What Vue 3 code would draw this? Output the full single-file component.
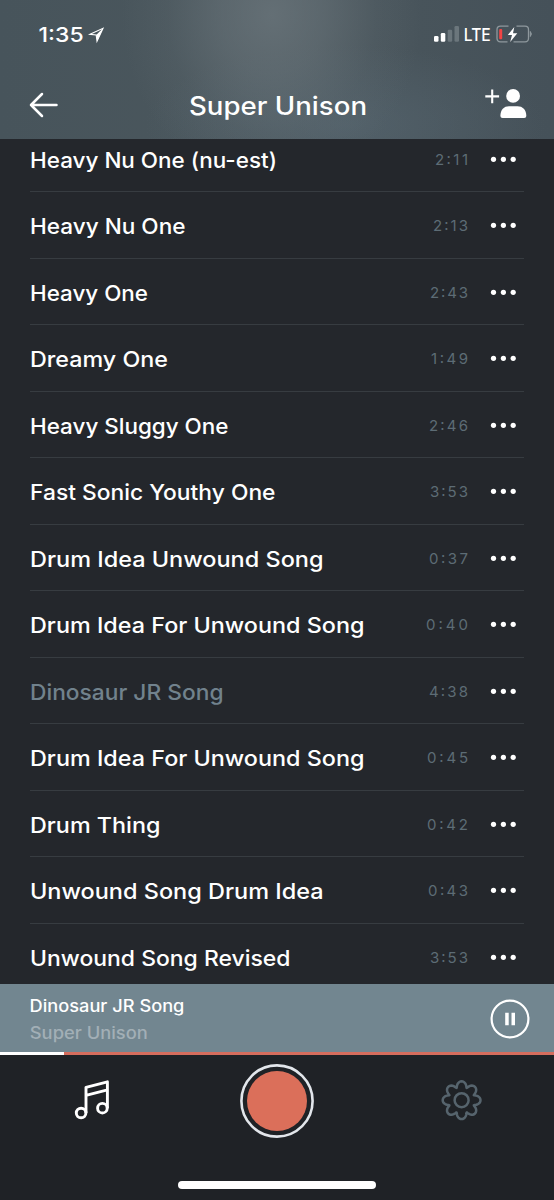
<script setup>
const songs = [
  { title: 'Heavy Nu One (nu-est)', width: 247, time: '2:11', timeWidth: 33 },
  { title: 'Heavy Nu One', width: 155.5, time: '2:13', timeWidth: 35 },
  { title: 'Heavy One', width: 118, time: '2:43', timeWidth: 38 },
  { title: 'Dreamy One', width: 138, time: '1:49', timeWidth: 37 },
  { title: 'Heavy Sluggy One', width: 198.5, time: '2:46', timeWidth: 39 },
  { title: 'Fast Sonic Youthy One', width: 245.5, time: '3:53', timeWidth: 38 },
  { title: 'Drum Idea Unwound Song', width: 293.5, time: '0:37', timeWidth: 39 },
  { title: 'Drum Idea For Unwound Song', width: 334.5, time: '0:40', timeWidth: 42 },
  { title: 'Dinosaur JR Song', width: 193.5, time: '4:38', timeWidth: 39, active: true },
  { title: 'Drum Idea For Unwound Song', width: 334.5, time: '0:45', timeWidth: 41 },
  { title: 'Drum Thing', width: 130.5, time: '0:42', timeWidth: 41 },
  { title: 'Unwound Song Drum Idea', width: 293.5, time: '0:43', timeWidth: 40 },
  { title: 'Unwound Song Revised', width: 260.5, time: '3:53', timeWidth: 38 },
]

const progress = 11.5

// Eight rounded teeth, swept around the hub
const gear = Array.from({ length: 160 }, (_, i) => {
  const a = (i / 160) * Math.PI * 2
  const r = 16.1 + 2.8 * Math.cos(8 * a)
  const t = a + 0.075 * Math.sin(8 * a)
  return `${i ? 'L' : 'M'}${(21.6 + r * Math.cos(t)).toFixed(2)} ${(20.2 + r * Math.sin(t)).toFixed(2)}`
}).join('') + 'Z'
</script>

<template>
  <div class="screen">
    <header class="header">
      <div class="status">
        <svg class="clock" width="70" height="24" viewBox="0 0 70 24">
          <text x="0.6" y="18.7" class="clock-text" textLength="45" lengthAdjust="spacingAndGlyphs">1:35</text>
          <path d="M52 11.3 65 5.3 59 18.3 58.2 12Z" fill="none" stroke="#fff" stroke-width="1.1" stroke-linejoin="miter" />
          <path d="M58.2 12 65 5.3 59.2 18Z" fill="#fff" />
        </svg>
        <svg class="signal" width="102" height="24" viewBox="0 0 102 24">
          <rect x="2" y="13" width="4.5" height="5.8" rx="1.3" fill="#fff" />
          <rect x="8.8" y="10" width="4.5" height="8.8" rx="1.3" fill="#fff" />
          <rect x="15.7" y="6.7" width="4.5" height="12.1" rx="1.3" fill="#6b767c" />
          <rect x="22.5" y="3" width="4.5" height="15.8" rx="1.3" fill="#6b767c" />
          <text x="31.8" y="18.3" class="network" textLength="27" lengthAdjust="spacingAndGlyphs">LTE</text>
          <path d="M76.5 3.2H68.5Q65 3.2 65 6.7V15.3Q65 18.8 68.5 18.8H75.5M84.5 3.2H93Q96.5 3.2 96.5 6.7V15.3Q96.5 18.8 93 18.8H81.5" fill="none" stroke="#8e989d" stroke-width="1.3" />
          <path d="M98.3 8.5Q100.4 11 98.3 13.5Z" fill="#8e989d" stroke="#8e989d" />
          <rect x="67.2" y="6" width="3" height="10.3" rx="1" fill="#f04444" />
          <path d="M82.3 4 75.8 12.1H80L78.2 19 85.3 10.2H81Z" fill="#fff" />
        </svg>
      </div>
      <div class="bar">
        <svg width="32" height="28" viewBox="0 0 32 28" fill="none" stroke="#fff" stroke-width="2.5" stroke-linecap="round" stroke-linejoin="round">
          <path d="M14 3 3 14 14 25M3 14H28.5" />
        </svg>
        <svg class="heading" width="182" height="36" viewBox="0 0 182 36">
          <text x="2" y="24" class="page-title" textLength="178" lengthAdjust="spacingAndGlyphs">Super Unison</text>
        </svg>
        <svg width="44" height="32" viewBox="0 0 44 32">
          <path d="M9.2 1.6V15.3M2.3 8.4H16.1" stroke="#fff" stroke-width="2.1" />
          <circle cx="30.1" cy="7.9" r="6.9" fill="#fff" />
          <path d="M17.4 28C17.4 21.5 21 18.2 26 18.2H34.5C39.5 18.2 43.3 21.5 43.3 28Q43.3 30.1 41.2 30.1H19.5Q17.4 30.1 17.4 28Z" fill="#fff" />
        </svg>
      </div>
    </header>

    <main class="list">
      <div v-for="(song, i) in songs" :key="i" class="row" :class="{ active: song.active }">
        <svg class="name" width="360" height="66" viewBox="0 0 360 66">
          <text x="0" y="41.8" :textLength="song.width" lengthAdjust="spacingAndGlyphs">{{ song.title }}</text>
        </svg>
        <svg class="time" width="50" height="66" viewBox="0 0 50 66">
          <text :x="49 - song.timeWidth" y="39.3" :textLength="song.timeWidth" lengthAdjust="spacing">{{ song.time }}</text>
        </svg>
        <svg class="more" width="30" height="66" viewBox="0 0 30 66" fill="#fff">
          <circle cx="4.5" cy="33.3" r="2.6" />
          <circle cx="14.4" cy="33.3" r="2.6" />
          <circle cx="24.2" cy="33.3" r="2.6" />
        </svg>
      </div>
    </main>

    <section class="player">
      <svg width="200" height="68" viewBox="0 0 200 68">
        <text x="0.6" y="27.8" class="now" textLength="154.8" lengthAdjust="spacingAndGlyphs">Dinosaur JR Song</text>
        <text x="0.8" y="54.6" class="band" textLength="118" lengthAdjust="spacingAndGlyphs">Super Unison</text>
      </svg>
      <svg width="42" height="42" viewBox="0 0 42 42">
        <circle cx="21" cy="21" r="18.4" fill="none" stroke="#fff" stroke-width="2.2" />
        <path d="M16.2 14.7h3.5v12.6h-3.5zM22.5 14.7h3.5v12.6h-3.5z" fill="#fff" />
      </svg>
    </section>
    <div class="track"><div class="played" :style="{ width: progress + '%' }"></div></div>

    <nav class="tabs">
      <div class="tab-icons">
        <svg width="42" height="42" viewBox="0 0 42 42" fill="none" stroke="#fff" stroke-width="2.9" stroke-linejoin="round">
          <circle cx="9.1" cy="33" r="4.8" />
          <circle cx="30.4" cy="28.2" r="4.8" />
          <path d="M14 33V7.3L35.4 1.8V28.2M14 15.4 35.4 9.9" />
        </svg>
        <svg width="76" height="76" viewBox="0 0 76 76">
          <circle cx="38" cy="38" r="35.6" fill="none" stroke="#e2e6eb" stroke-width="2.6" />
          <circle cx="38" cy="38" r="30" fill="#db6f5a" />
        </svg>
        <svg width="42" height="42" viewBox="0 0 42 42" fill="none" stroke="#56646d" stroke-width="2.5">
          <path :d="gear" />
          <circle cx="21.6" cy="20.2" r="7" />
        </svg>
      </div>
      <div class="home"></div>
    </nav>
  </div>
</template>

<style>
body {
  background: #24272c;
}
</style>

<style scoped>
.screen {
  width: 554px;
  height: 1200px;
  display: flex;
  flex-direction: column;
  overflow: hidden;
  background: #24272c;
  font-family: Inter, "Liberation Sans", sans-serif;
}
svg {
  display: block;
  flex: none;
}
text {
  fill: #fff;
}
.header {
  flex: none;
  height: 139px;
  box-sizing: border-box;
  padding-top: 23px;
  background:
    radial-gradient(ellipse 150px 170px at 272px 15px, rgba(108, 119, 125, 0.75), rgba(108, 119, 125, 0.5) 35%, rgba(108, 119, 125, 0.15) 70%, rgba(108, 119, 125, 0)),
    radial-gradient(ellipse 200px 80px at 345px 125px, rgba(91, 108, 119, 0.5), rgba(91, 108, 119, 0)),
    linear-gradient(90deg, #47545b, #4b575d 50%, #455159);
}
.status {
  display: flex;
  justify-content: space-between;
  height: 24px;
  padding: 0 20px 0 38px;
}
.clock-text {
  font-size: 20.3px;
  font-weight: 500;
}
.network {
  font-size: 17px;
  font-weight: 500;
}
.bar {
  display: grid;
  grid-template-columns: 44px 1fr 44px;
  align-items: start;
  height: 36px;
  margin-top: 41px;
  padding: 0 27px 0 28px;
}
.bar > svg:first-child {
  margin-top: 3px;
}
.heading {
  justify-self: center;
  margin-top: 3px;
}
.page-title {
  font-size: 25px;
  font-weight: 500;
}
.list {
  flex: none;
  height: 845px;
  overflow: hidden;
  padding: 0 30px;
}
.row {
  display: flex;
  height: 66.5px;
  box-sizing: border-box;
  border-bottom: 1px solid #373c41;
}
.row:first-child {
  margin-top: -13.5px;
}
.name {
  margin-left: -0.4px;
  font-size: 21.5px;
  font-weight: 500;
}
.active .name text {
  fill: #71828d;
}
.time {
  margin-left: auto;
  font-size: 15px;
}
.time text {
  fill: #5d6c75;
}
.more {
  margin-left: 20px;
  margin-right: 5px;
}
.player {
  flex: none;
  display: flex;
  align-items: center;
  justify-content: space-between;
  height: 68px;
  padding: 0 23px 0 29px;
  background: #728690;
}
.player > svg:last-child {
  margin-top: 2px;
}
.now {
  font-size: 16.8px;
  font-weight: 500;
}
.band {
  font-size: 16.8px;
  font-weight: 500;
  fill: #a2afb6;
}
.track {
  flex: none;
  height: 3px;
  background: #d56d5d;
}
.played {
  height: 3px;
  background: #fff;
}
.tabs {
  flex: 1;
  display: flex;
  flex-direction: column;
  justify-content: space-between;
  align-items: center;
  padding: 8px 0 11px;
  background: #1f2226;
}
.tab-icons {
  display: flex;
  align-items: center;
  justify-content: space-between;
  width: 410px;
}
.home {
  width: 198px;
  height: 8px;
  border-radius: 4px;
  background: #fff;
}
</style>
